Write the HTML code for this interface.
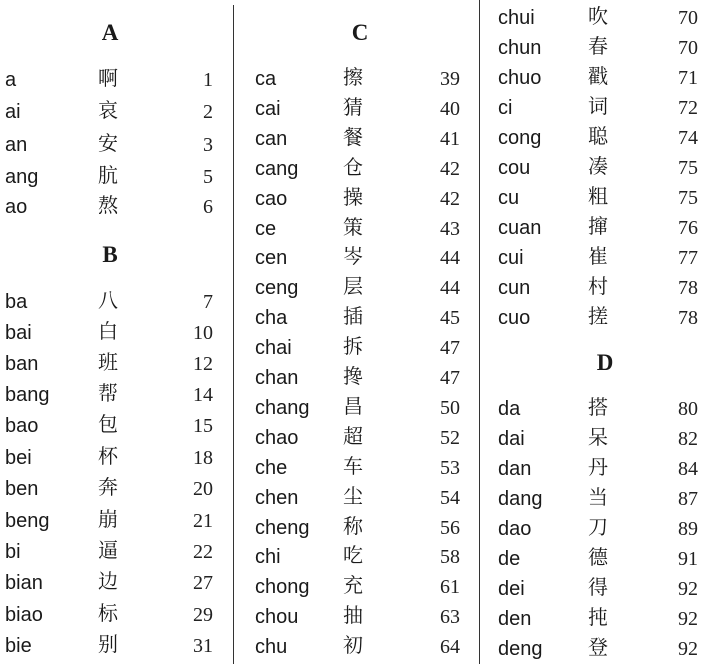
<!DOCTYPE html>
<html><head><meta charset="utf-8"><style>
body{margin:0;width:714px;height:664px;background:#fff;position:relative;overflow:hidden;color:#1a1a1a}
.r{position:absolute;height:30px;line-height:30px;font-size:20px}
.p{position:absolute;left:0;top:0;font-family:"Liberation Sans","DejaVu Sans",sans-serif}
.h{position:absolute;top:-3px;font-family:"Noto Serif CJK SC","Liberation Serif",serif}
.n{position:absolute;right:0;top:0;font-family:"Liberation Serif",serif;color:#222}
.c1{left:5px;width:208px}.c1 .h{left:93px}
.c2{left:255px;width:205px}.c2 .h{left:88px}
.c3{left:498px;width:200px}.c3 .h{left:90px}
.H{position:absolute;font-family:"Liberation Serif",serif;font-weight:bold;font-size:23px;height:30px;line-height:30px;width:40px;text-align:center}
.v{position:absolute;width:1px;background:#333}
</style></head><body>
<div class="v" style="left:233px;top:5px;height:659px"></div>
<div class="v" style="left:479px;top:0;height:664px"></div>

<div class="H" style="left:90px;top:18px">A</div>
<div class="r c1" style="top:65px"><span class="p">a</span><span class="h">啊</span><span class="n">1</span></div>
<div class="r c1" style="top:97px"><span class="p">ai</span><span class="h">哀</span><span class="n">2</span></div>
<div class="r c1" style="top:130px"><span class="p">an</span><span class="h">安</span><span class="n">3</span></div>
<div class="r c1" style="top:162px"><span class="p">ang</span><span class="h">肮</span><span class="n">5</span></div>
<div class="r c1" style="top:192px"><span class="p">ao</span><span class="h">熬</span><span class="n">6</span></div>
<div class="H" style="left:90px;top:240px">B</div>
<div class="r c1" style="top:287px"><span class="p">ba</span><span class="h">八</span><span class="n">7</span></div>
<div class="r c1" style="top:318px"><span class="p">bai</span><span class="h">白</span><span class="n">10</span></div>
<div class="r c1" style="top:349px"><span class="p">ban</span><span class="h">班</span><span class="n">12</span></div>
<div class="r c1" style="top:380px"><span class="p">bang</span><span class="h">帮</span><span class="n">14</span></div>
<div class="r c1" style="top:411px"><span class="p">bao</span><span class="h">包</span><span class="n">15</span></div>
<div class="r c1" style="top:443px"><span class="p">bei</span><span class="h">杯</span><span class="n">18</span></div>
<div class="r c1" style="top:474px"><span class="p">ben</span><span class="h">奔</span><span class="n">20</span></div>
<div class="r c1" style="top:506px"><span class="p">beng</span><span class="h">崩</span><span class="n">21</span></div>
<div class="r c1" style="top:537px"><span class="p">bi</span><span class="h">逼</span><span class="n">22</span></div>
<div class="r c1" style="top:568px"><span class="p">bian</span><span class="h">边</span><span class="n">27</span></div>
<div class="r c1" style="top:600px"><span class="p">biao</span><span class="h">标</span><span class="n">29</span></div>
<div class="r c1" style="top:631px"><span class="p">bie</span><span class="h">别</span><span class="n">31</span></div>

<div class="H" style="left:340px;top:18px">C</div>
<div class="r c2" style="top:64px"><span class="p">ca</span><span class="h">擦</span><span class="n">39</span></div>
<div class="r c2" style="top:94px"><span class="p">cai</span><span class="h">猜</span><span class="n">40</span></div>
<div class="r c2" style="top:124px"><span class="p">can</span><span class="h">餐</span><span class="n">41</span></div>
<div class="r c2" style="top:154px"><span class="p">cang</span><span class="h">仓</span><span class="n">42</span></div>
<div class="r c2" style="top:184px"><span class="p">cao</span><span class="h">操</span><span class="n">42</span></div>
<div class="r c2" style="top:214px"><span class="p">ce</span><span class="h">策</span><span class="n">43</span></div>
<div class="r c2" style="top:243px"><span class="p">cen</span><span class="h">岑</span><span class="n">44</span></div>
<div class="r c2" style="top:273px"><span class="p">ceng</span><span class="h">层</span><span class="n">44</span></div>
<div class="r c2" style="top:303px"><span class="p">cha</span><span class="h">插</span><span class="n">45</span></div>
<div class="r c2" style="top:333px"><span class="p">chai</span><span class="h">拆</span><span class="n">47</span></div>
<div class="r c2" style="top:363px"><span class="p">chan</span><span class="h">搀</span><span class="n">47</span></div>
<div class="r c2" style="top:393px"><span class="p">chang</span><span class="h">昌</span><span class="n">50</span></div>
<div class="r c2" style="top:423px"><span class="p">chao</span><span class="h">超</span><span class="n">52</span></div>
<div class="r c2" style="top:453px"><span class="p">che</span><span class="h">车</span><span class="n">53</span></div>
<div class="r c2" style="top:483px"><span class="p">chen</span><span class="h">尘</span><span class="n">54</span></div>
<div class="r c2" style="top:513px"><span class="p">cheng</span><span class="h">称</span><span class="n">56</span></div>
<div class="r c2" style="top:542px"><span class="p">chi</span><span class="h">吃</span><span class="n">58</span></div>
<div class="r c2" style="top:572px"><span class="p">chong</span><span class="h">充</span><span class="n">61</span></div>
<div class="r c2" style="top:602px"><span class="p">chou</span><span class="h">抽</span><span class="n">63</span></div>
<div class="r c2" style="top:632px"><span class="p">chu</span><span class="h">初</span><span class="n">64</span></div>

<div class="r c3" style="top:3px"><span class="p">chui</span><span class="h">吹</span><span class="n">70</span></div>
<div class="r c3" style="top:33px"><span class="p">chun</span><span class="h">春</span><span class="n">70</span></div>
<div class="r c3" style="top:63px"><span class="p">chuo</span><span class="h">戳</span><span class="n">71</span></div>
<div class="r c3" style="top:93px"><span class="p">ci</span><span class="h">词</span><span class="n">72</span></div>
<div class="r c3" style="top:123px"><span class="p">cong</span><span class="h">聪</span><span class="n">74</span></div>
<div class="r c3" style="top:153px"><span class="p">cou</span><span class="h">凑</span><span class="n">75</span></div>
<div class="r c3" style="top:183px"><span class="p">cu</span><span class="h">粗</span><span class="n">75</span></div>
<div class="r c3" style="top:213px"><span class="p">cuan</span><span class="h">撺</span><span class="n">76</span></div>
<div class="r c3" style="top:243px"><span class="p">cui</span><span class="h">崔</span><span class="n">77</span></div>
<div class="r c3" style="top:273px"><span class="p">cun</span><span class="h">村</span><span class="n">78</span></div>
<div class="r c3" style="top:303px"><span class="p">cuo</span><span class="h">搓</span><span class="n">78</span></div>
<div class="H" style="left:585px;top:348px">D</div>
<div class="r c3" style="top:394px"><span class="p">da</span><span class="h">搭</span><span class="n">80</span></div>
<div class="r c3" style="top:424px"><span class="p">dai</span><span class="h">呆</span><span class="n">82</span></div>
<div class="r c3" style="top:454px"><span class="p">dan</span><span class="h">丹</span><span class="n">84</span></div>
<div class="r c3" style="top:484px"><span class="p">dang</span><span class="h">当</span><span class="n">87</span></div>
<div class="r c3" style="top:514px"><span class="p">dao</span><span class="h">刀</span><span class="n">89</span></div>
<div class="r c3" style="top:544px"><span class="p">de</span><span class="h">德</span><span class="n">91</span></div>
<div class="r c3" style="top:574px"><span class="p">dei</span><span class="h">得</span><span class="n">92</span></div>
<div class="r c3" style="top:604px"><span class="p">den</span><span class="h">扽</span><span class="n">92</span></div>
<div class="r c3" style="top:634px"><span class="p">deng</span><span class="h">登</span><span class="n">92</span></div>
</body></html>
